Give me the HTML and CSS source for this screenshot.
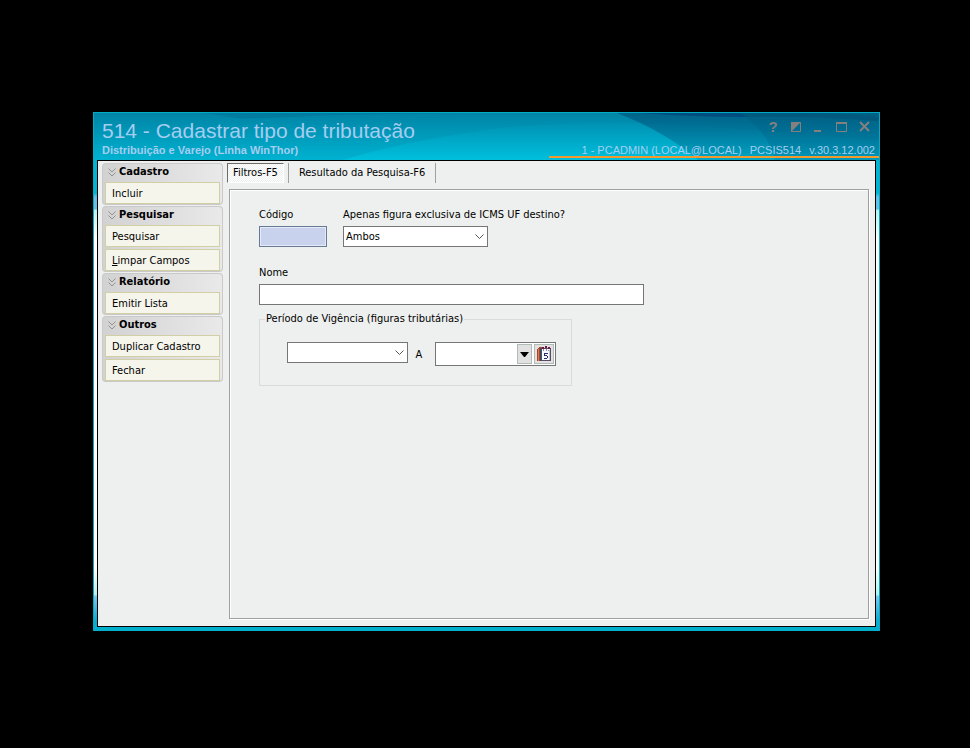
FILE: index.html
```html
<!DOCTYPE html>
<html lang="pt-BR">
<head>
<meta charset="utf-8">
<title>514 - Cadastrar tipo de tributação</title>
<link rel="stylesheet" href="styles.css">
</head>
<body>
<div class="window">
  <header class="titlebar">
    <svg class="waves" viewBox="0 0 785 47" preserveAspectRatio="none" aria-hidden="true">
      <defs>
        <linearGradient id="base" x1="0" y1="0" x2="0" y2="1"><stop offset="0" stop-color="#0084a6"/><stop offset="1" stop-color="#00b2d0"/></linearGradient>
        <linearGradient id="crest" x1="0" y1="0" x2="0" y2="1"><stop offset="0" stop-color="#0092b4"/><stop offset="1" stop-color="#00c0dc"/></linearGradient>
        <linearGradient id="fade" x1="0" y1="0" x2="0" y2="1"><stop offset="0" stop-color="#00577f" stop-opacity=".75"/><stop offset="1" stop-color="#006f94" stop-opacity=".3"/></linearGradient>
        <linearGradient id="corner" x1="0" y1="0" x2="0" y2="1"><stop offset="0" stop-color="#005c80" stop-opacity=".5"/><stop offset="1" stop-color="#006f94" stop-opacity=".25"/></linearGradient>
      </defs>
      <rect width="785" height="47" fill="url(#base)"/>
      <path d="M110 0H370Q240 1 150 6Z" fill="#007499" opacity=".6"/>
      <path d="M249 47Q310 28 406 15Q489 8 560 11Q660 16 785 28V47Z" fill="url(#crest)"/>
      <path d="M523 0Q572 19 604 47H785V0Z" fill="url(#fade)"/>
      <path d="M646 0Q676 20 680 47H785V0Z" fill="url(#corner)"/>
      <path d="M545 0H646L653 4Q600 4 545 0Z" fill="#004d80"/>
      <path d="M646 0H730Q760 1 785 4V8Q715 3 653 4Z" fill="#00557b" opacity=".7"/>
    </svg>
    <div class="titles">
      <h1>514 - Cadastrar tipo de tributação</h1>
      <p>Distribuição e Varejo (Linha WinThor)</p>
    </div>
    <div class="status">
      <div class="controls">
        <button class="help" type="button" aria-label="Ajuda">?</button>
        <button type="button" aria-label="Alternar"><svg viewBox="0 0 12 12"><path d="M1.500 1.500h9v9h-9z" fill="none" stroke="currentColor"/><path d="M1 1h10L1 11z" fill="currentColor"/></svg></button>
        <button type="button" aria-label="Minimizar"><svg viewBox="0 0 12 12"><path d="M1 9h7v2H1z" fill="currentColor"/></svg></button>
        <button type="button" aria-label="Maximizar"><svg viewBox="0 0 12 12"><path d="M.5 1.500h10v9H.5z" fill="none" stroke="currentColor"/><path d="M0 1h11v2H0z" fill="currentColor"/></svg></button>
        <button type="button" aria-label="Fechar"><svg viewBox="0 0 12 12"><path d="M1 1l9 9M10 1L1 10" fill="none" stroke="currentColor" stroke-width="2"/></svg></button>
      </div>
      <p class="session"><span>1 - PCADMIN (LOCAL@LOCAL)</span><span>PCSIS514</span><span>v.30.3.12.002</span></p>
    </div>
  </header>
  <div class="client">
    <nav class="sidebar">
      <section class="group">
        <h2><svg class="chevrons" viewBox="0 0 8 9"><path d="M.5 .5L4 4L7.500 .5M.5 4.500L4 8L7.500 4.500"/></svg>Cadastro</h2>
        <button type="button">Incluir</button>
      </section>
      <section class="group">
        <h2><svg class="chevrons" viewBox="0 0 8 9"><path d="M.5 .5L4 4L7.500 .5M.5 4.500L4 8L7.500 4.500"/></svg>Pesquisar</h2>
        <button type="button">Pesquisar</button>
        <button type="button"><u>L</u>impar Campos</button>
      </section>
      <section class="group">
        <h2><svg class="chevrons" viewBox="0 0 8 9"><path d="M.5 .5L4 4L7.500 .5M.5 4.500L4 8L7.500 4.500"/></svg>Relatório</h2>
        <button type="button">Emitir Lista</button>
      </section>
      <section class="group">
        <h2><svg class="chevrons" viewBox="0 0 8 9"><path d="M.5 .5L4 4L7.500 .5M.5 4.500L4 8L7.500 4.500"/></svg>Outros</h2>
        <button type="button">Duplicar Cadastro</button>
        <button type="button">Fechar</button>
      </section>
    </nav>
    <main class="main">
      <div class="tabs" role="tablist">
        <button class="tab active" type="button" role="tab" aria-selected="true">Filtros-F5</button>
        <button class="tab" type="button" role="tab" aria-selected="false">Resultado da Pesquisa-F6</button>
      </div>
      <form class="panel">
        <div class="row">
          <div class="field code">
            <label for="codigo">Código</label>
            <input id="codigo" type="text">
          </div>
          <div class="field">
            <label for="exclusiva">Apenas figura exclusiva de ICMS UF destino?</label>
            <div class="combo wide">
              <select id="exclusiva"><option>Ambos</option></select>
              <svg class="arrow" viewBox="0 0 9 5"><path d="M.5 .5L4.500 4.500L8.500 .5"/></svg>
            </div>
          </div>
        </div>
        <div class="field name">
          <label for="nome">Nome</label>
          <input id="nome" type="text">
        </div>
        <fieldset>
          <legend>Período de Vigência (figuras tributárias)</legend>
          <div class="period">
            <div class="combo">
              <select id="inicio" aria-label="Data inicial"><option></option></select>
              <svg class="arrow" viewBox="0 0 9 5"><path d="M.5 .5L4.500 4.500L8.500 .5"/></svg>
            </div>
            <label for="fim">A</label>
            <div class="date">
              <input id="fim" type="text">
              <button class="drop" type="button" aria-label="Abrir lista"><svg viewBox="0 0 9 5"><path d="M0 0h9L5 5H4z"/></svg></button>
              <button class="calendar" type="button" aria-label="Calendário">
                <svg viewBox="0 0 15 16" shape-rendering="crispEdges">
                  <path d="M0 3l2-2h3v14H0z" fill="#a8432c"/>
                  <path d="M1 3h1v12H1z" fill="#e07b54"/>
                  <path d="M3 2h1v13H3z" fill="#26545e"/>
                  <path d="M4 2h10v13H4z" fill="#5a4a66"/>
                  <path d="M5 3h8v11H5z" fill="#f8f9ff"/>
                  <path d="M12 4h1v10h-1z" fill="#c4c3d4"/>
                  <path d="M5 1h2v2H5zM8 0h2v2H8zM11 1h2v2h-2z" fill="#6d1740"/>
                  <path d="M6 3h1v2H6zM9 3h1v2H9zM11 4h1v1h-1z" fill="#8b8da1"/>
                  <path d="M7 7h4v1H8v1h2v1h1v2h-1v1H7v-1h3v-2H7z" fill="#262a6e"/>
                </svg>
              </button>
            </div>
          </div>
        </fieldset>
      </form>
    </main>
  </div>
</div>
</body>
</html>
```
FILE: styles.css
```css
* { box-sizing: border-box; }

body {
  margin: 0;
  min-height: 100vh;
  padding: 112px 90px 117px 93px;
  display: flex;
  background: #000;
  color: #000;
  font: 11px/14px "DejaVu Sans Condensed", "DejaVu Sans", sans-serif;
}

h1, h2, p { margin: 0; }
button, input, select { font: inherit; color: inherit; margin: 0; border-radius: 0; }
svg { display: block; }

.window {
  flex: 1;
  display: flex;
  flex-direction: column;
  border: 1px solid #00acc5;
  border-bottom-width: 0;
  background: linear-gradient(#00b4d2 68px, #00b4d2 80px, #66bfe5 84px, #66bfe5 96px, #b5f0ed 97px, #fff 125px, #fff 455px, #b5f0ed 482px, #7bc9ee 483px, #49b7dc 495px, #0bacd2 508px);
}

.titlebar {
  position: relative;
  display: flex;
  justify-content: space-between;
  height: 47px;
  font-family: "Liberation Sans", sans-serif;
  color: #a5cdf0;
}
.waves { position: absolute; inset: 0; width: 100%; height: 100%; }
.titles { position: relative; padding: 6px 0 0 8px; }
.titles h1 { font-size: 21px; line-height: 24px; font-weight: 400; }
.titles p { font-size: 11px; line-height: 14px; font-weight: 700; }

.status {
  position: relative;
  width: 42%;
  padding: 7px 0 2px;
  display: flex;
  flex-direction: column;
  justify-content: space-between;
}
.controls { display: flex; justify-content: flex-end; gap: 11px; padding-right: 8px; }
.controls button {
  width: 12px;
  height: 14px;
  padding: 1px 0;
  border: 0;
  background: none;
  color: #85807e;
}
.controls .help { font: 700 15px/12px "Liberation Sans", sans-serif; }
.session {
  display: flex;
  justify-content: flex-end;
  gap: 8px;
  padding-right: 4px;
  border-bottom: 2px solid #f4992c;
  font-size: 11px;
  line-height: 12px;
}

.client {
  flex: 1;
  display: flex;
  gap: 4px;
  margin: 0 3px 4px;
  padding: 2px 6px 7px 4px;
  border: 1px solid #000;
  background: #eef0ef;
  box-shadow: 0 4px #00b0ca;
}

.sidebar { width: 121px; display: flex; flex-direction: column; gap: 1px; }
.group {
  display: flex;
  flex-direction: column;
  gap: 2px;
  padding: 0 2px 1px;
  border: 1px solid #c9c9c9;
  border-width: 1px 1px 0;
  border-radius: 4px;
  background: linear-gradient(90deg, #d2d2d2, #e9e9e9);
  box-shadow: inset 0 -1px #c9c9c9;
}
.group h2 {
  display: flex;
  align-items: center;
  gap: 3px;
  height: 16px;
  padding-left: 3px;
  font-size: 11px;
  line-height: 16px;
}
.chevrons { width: 8px; height: 9px; fill: none; stroke: #929292; }
.group button {
  height: 22px;
  padding: 1px 6px 0;
  border: 1px solid #d3cfa5;
  background: #f6f5ec;
  text-align: left;
}

.main { flex: 1; display: flex; flex-direction: column; min-width: 0; }
.tabs { display: flex; height: 20px; margin-bottom: 6px; }
.tab {
  height: 20px;
  padding: 0 10px;
  border: 0;
  border-right: 1px solid #a0a0a0;
  border-left: 1px solid #a0a0a0;
  background: none;
  line-height: 18px;
}
.tab.active {
  margin-right: 4px;
  padding: 0 5px;
  border: 1px solid #fff;
  border-color: #716b67 #fff #fff #716b67;
  background: repeating-conic-gradient(#eef0ef 0 25%, #fff 0 50%) 0 0 / 2px 2px;
}

.panel {
  flex: 1;
  margin-left: 2px;
  padding: 18px 29px;
  border: 1px solid #a0a0a0;
  box-shadow: inset 1px 1px #fff, 1px 1px #fff;
}
.row { display: flex; gap: 16px; }
.field { display: flex; flex-direction: column; gap: 4px; }
.field.code { width: 68px; }
.field.name { width: 385px; max-width: 100%; margin-top: 19px; }
input, select {
  width: 100%;
  height: 21px;
  padding: 0 2px;
  border: 1px solid #767676;
  background: #fff;
  outline: 0;
}
.code input { border-color: #667b92; background: #c8d2ed; box-shadow: inset 0 0 0 1px #e5eafa; }
.combo { position: relative; width: 121px; }
.combo.wide { width: 145px; }
select { appearance: none; }
.arrow {
  position: absolute;
  right: 4px;
  top: 8px;
  width: 9px;
  height: 5px;
  fill: none;
  stroke: #555;
  pointer-events: none;
}

fieldset {
  width: 313px;
  max-width: 100%;
  margin: 7px 0 0;
  padding: 16px 15px 19px 27px;
  border: 1px solid #dadcdb;
}
legend { margin-left: -22px; padding: 0 1px; line-height: 14px; }
.period { display: flex; align-items: flex-start; }
.period label { width: 27px; padding: 6px 5px 0 0; text-align: center; }
.date {
  display: flex;
  gap: 2px;
  width: 121px;
  height: 24px;
  padding: 1px;
  border: 1px solid #767676;
  background: #fff;
}
.date input { flex: 1; min-width: 0; height: 20px; border: 0; }
.date button {
  display: grid;
  place-items: center;
  height: 20px;
  padding: 0;
  border: 1px solid #b0bbb5;
  background: #e1e1e1;
}
.drop { width: 15px; }
.drop svg { width: 9px; height: 5px; }
.calendar { width: 20px; }
.calendar svg { width: 15px; height: 16px; }
```
